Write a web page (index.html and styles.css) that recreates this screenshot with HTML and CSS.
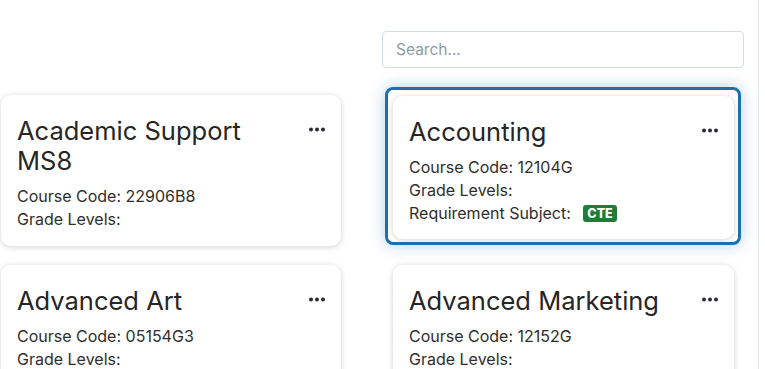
FILE: index.html
```html
<!DOCTYPE html>
<html lang="en">
<head>
<meta charset="utf-8">
<title>Courses</title>
<link rel="stylesheet" href="styles.css">
</head>
<body>
<div class="page">
  <div class="toolbar">
    <input class="search" type="text" placeholder="Search...">
  </div>
  <div class="grid">
    <div class="card">
      <div class="card-head">
        <h2 class="title">Academic Support MS8</h2>
        <svg class="menu" width="16" height="5" viewBox="0 0 16 5"><circle cx="2" cy="2.5" r="2"/><circle cx="8" cy="2.5" r="2"/><circle cx="14" cy="2.5" r="2"/></svg>
      </div>
      <div class="info">Course Code: 22906B8</div>
      <div class="info">Grade Levels:</div>
    </div>
    <div class="card selected">
      <div class="card-head">
        <h2 class="title">Accounting</h2>
        <svg class="menu" width="16" height="5" viewBox="0 0 16 5"><circle cx="2" cy="2.5" r="2"/><circle cx="8" cy="2.5" r="2"/><circle cx="14" cy="2.5" r="2"/></svg>
      </div>
      <div class="info">Course Code: 12104G</div>
      <div class="info">Grade Levels:</div>
      <div class="info">Requirement Subject: <span class="badge">CTE</span></div>
    </div>
    <div class="card">
      <div class="card-head">
        <h2 class="title">Advanced Art</h2>
        <svg class="menu" width="16" height="5" viewBox="0 0 16 5"><circle cx="2" cy="2.5" r="2"/><circle cx="8" cy="2.5" r="2"/><circle cx="14" cy="2.5" r="2"/></svg>
      </div>
      <div class="info">Course Code: 05154G3</div>
      <div class="info">Grade Levels:</div>
    </div>
    <div class="card">
      <div class="card-head">
        <h2 class="title">Advanced Marketing</h2>
        <svg class="menu" width="16" height="5" viewBox="0 0 16 5"><circle cx="2" cy="2.5" r="2"/><circle cx="8" cy="2.5" r="2"/><circle cx="14" cy="2.5" r="2"/></svg>
      </div>
      <div class="info">Course Code: 12152G</div>
      <div class="info">Grade Levels:</div>
    </div>
  </div>
</div>
</body>
</html>
```
FILE: styles.css
```css
html, body {
  margin: 0;
  padding: 0;
  background: #ffffff;
}
body {
  font-family: "Inter", "Noto Sans", sans-serif;
  color: #2a2a2a;
  overflow: hidden;
}
.page {
  width: 758px;
  height: 369px;
  border-right: 1px solid #e1e6ea;
  overflow: hidden;
}
.toolbar {
  display: flex;
  justify-content: flex-end;
  padding: 31px 14px 0 0;
}
.search {
  box-sizing: border-box;
  width: 362px;
  height: 37px;
  border: 1px solid #d3dde6;
  border-radius: 4px;
  padding: 0 13px;
  font-family: inherit;
  font-size: 15.5px;
  color: #333;
  outline: none;
}
.search::placeholder {
  color: #8e9aa6;
}
.grid {
  display: grid;
  grid-template-columns: 340px 341px;
  column-gap: 52px;
  row-gap: 19px;
  align-items: start;
  padding: 27px 0 0 1px;
}
.card {
  position: relative;
  background: #fff;
  border-radius: 10px;
  box-shadow: 0 1px 6px rgba(0, 0, 0, 0.18);
  padding: 21px 16px 15px 16px;
}
.card.selected {
  margin-top: 1px;
  padding-bottom: 14px;
}
.card.selected::before {
  content: "";
  position: absolute;
  top: -9px;
  left: -8px;
  right: -7px;
  bottom: -6px;
  border: 3px solid #1b70ad;
  border-radius: 8px;
  box-shadow: 0 0 16px rgba(27, 112, 173, 0.32);
  pointer-events: none;
}
.card-head {
  display: flex;
  justify-content: space-between;
  align-items: flex-start;
  margin-bottom: 9px;
}
.title {
  margin: 0;
  font-size: 25.5px;
  font-weight: 400;
  line-height: 30px;
  color: #262626;
  max-width: 270px;
}
.menu {
  flex: none;
  margin-top: 11px;
  margin-right: 0;
  fill: #2a2a3a;
}
.info {
  font-size: 16px;
  line-height: 23px;
  color: #2e2e2e;
}
.badge {
  display: inline-block;
  background: #1e7d36;
  color: #fff;
  font-weight: 800;
  font-size: 12.5px;
  line-height: 15px;
  padding: 1px 4px;
  margin-left: 8px;
  border-radius: 3px;
  vertical-align: 1px;
}
```
